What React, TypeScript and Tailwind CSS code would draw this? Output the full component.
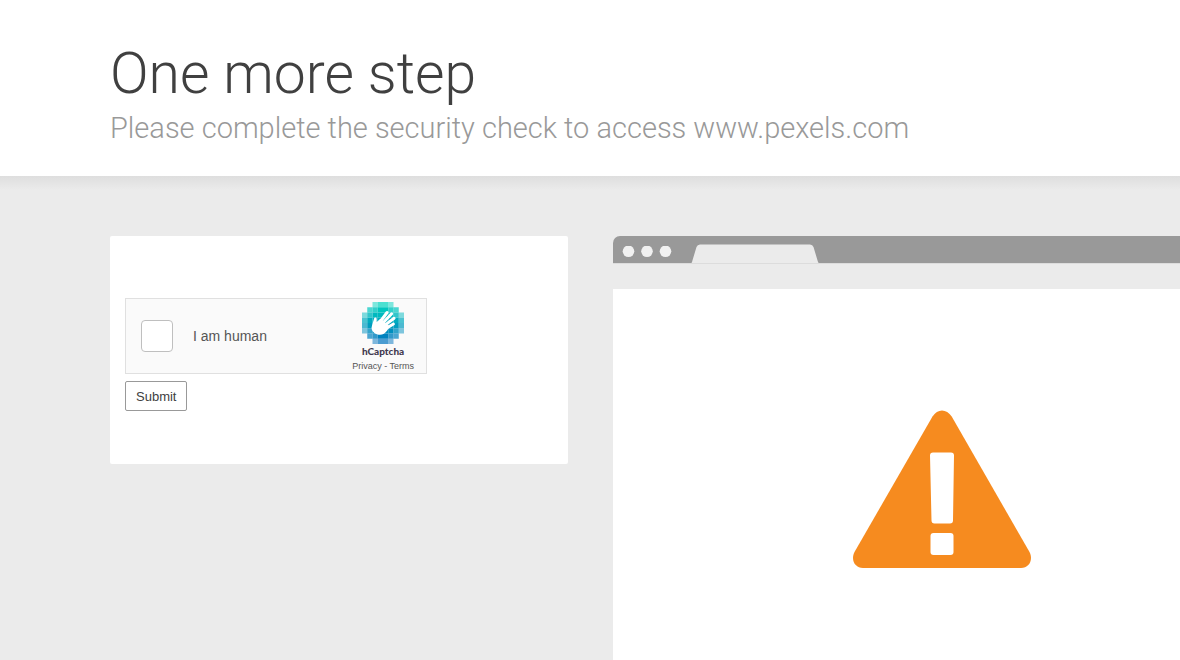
import { clsx } from "clsx";

// One colour per row of the logo grid, one opacity per cell
const logoRows = [
    { color: "#00D4BF", cells: [0, 0, 0.5, 0.7, 0.7, 0.5, 0, 0] },
    { color: "#00C6BF", cells: [0, 0.7, 0.8, 1, 1, 0.8, 0.7, 0] },
    { color: "#00B9BF", cells: [0.5, 0.8, 1, 1, 1, 1, 0.8, 0.5] },
    { color: "#00ABBF", cells: [0.7, 1, 1, 1, 1, 1, 1, 0.7] },
    { color: "#009DBF", cells: [0.7, 1, 1, 1, 1, 1, 1, 0.7] },
    { color: "#008FBF", cells: [0.5, 0.8, 1, 1, 1, 1, 0.8, 0.5] },
    { color: "#0082BF", cells: [0, 0.7, 0.8, 1, 1, 0.8, 0.7, 0] },
    { color: "#0074BF", cells: [0, 0, 0.5, 0.7, 0.7, 0.5, 0, 0] },
];

function CaptchaLogo() {
    return (
        <svg viewBox="0 0 32 32" className="size-[42px]" aria-hidden="true">
            {logoRows.map((row, y) =>
                row.cells.map((opacity, x) =>
                    opacity > 0 ? (
                        <rect key={`${x}-${y}`} x={x * 4} y={y * 4} width="4" height="4" fill={row.color} opacity={opacity} />
                    ) : null
                )
            )}
            <path
                d="M7.900 17 9.100 12.900C9.500 11.400 11.300 11.600 11.200 13.200L11.200 15.200 14 12.800 21 18.500 19.200 21.800C17.500 24.300 15.200 25.300 12.600 24.900 9.200 24.400 7.200 21.900 7.300 19.400Z"
                fill="#fff"
            />
            <g stroke="#fff" strokeWidth="2.3" strokeLinecap="round">
                <path d="M13.3 15.8 19.1 8" />
                <path d="M15 17 22.6 9" />
                <path d="M16.500 18.400 24.400 12.400" />
                <path d="M17 21 23.900 16.800" />
            </g>
        </svg>
    );
}

function Captcha() {
    return (
        <div className="flex h-[76px] w-full max-w-[302px] items-center justify-between border border-[#e0e0e0] bg-[#fafafa] pr-3 pl-[15px]">
            <div className="flex items-center gap-5">
                <input
                    id="human"
                    type="checkbox"
                    className="size-8 appearance-none rounded border border-[#bfbfbf] bg-white checked:bg-[#00838f]"
                />
                <label htmlFor="human" className="text-sm text-[#555]">
                    I am human
                </label>
            </div>
            <div className="flex flex-col items-center pt-0.5">
                <CaptchaLogo />
                <span className="font-['Lato',sans-serif] text-[10px] leading-[14px] font-black text-[#433a51]">hCaptcha</span>
                <span className="mt-px text-[9px] leading-[14px] text-[#555]">
                    <a href="#privacy">Privacy</a> - <a href="#terms">Terms</a>
                </span>
            </div>
        </div>
    );
}

function BrowserFrame() {
    return (
        <div className="flex min-w-[658px] flex-1 flex-col">
            <div className="flex h-7 items-center gap-[7px] rounded-tl-[7px] border-b border-[#dcdcdc] bg-[#999] pl-[9px]">
                <svg viewBox="0 0 50 12" className="mt-1 h-3 w-[50px]" aria-hidden="true">
                    {[6.5, 25, 43.5].map(cx => (
                        <circle key={cx} cx={cx} cy="5.300" r="5.800" fill="#f1f1f1" />
                    ))}
                </svg>
                <svg viewBox="0 0 128 19" className="ml-3 h-[19px] w-32 self-end" aria-hidden="true">
                    <path d="M0 19C1 19 1 18 1.300 17L5.500 3Q6.400 .5 9 .5H119Q121.600 .5 122.500 3L126.700 17Q127 19 128 19Z" fill="#ebebeb" />
                </svg>
            </div>
            <div className="mt-[25px] flex flex-1 justify-center bg-white pt-[121px]">
                <svg viewBox="0 0 178 158" className="h-[158px] w-[178px]" aria-hidden="true">
                    <path
                        d="M79.500 6.500C84.500 -1.500 93.500 -1.500 98.700 6.500L176.500 142C180.500 150 176 158 168 158H10C2 158 -2.500 150 1.500 142Z"
                        fill="#f68b1f"
                    />
                    <path d="M80 42.500H98Q101 42.500 101 45.500L100 110.500Q100 113.500 97 113.500H81.500Q78.500 113.500 78.500 110.500L77 45.500Q77 42.500 80 42.500Z" fill="#fff" />
                    <rect x="77.500" y="123" width="23" height="22" rx="3" fill="#fff" />
                </svg>
            </div>
        </div>
    );
}

export default function App() {
    const container = "mx-auto w-full max-w-[960px]";

    return (
        <div className="flex min-h-screen flex-col overflow-hidden bg-white font-['Liberation_Sans',Arial,sans-serif] text-[#404040]">
            <header className={clsx(container, "pt-[38px] pb-[29px] font-['Roboto',sans-serif] font-light")}>
                <h1 className="text-[57px] leading-[72px]">One more step</h1>
                <h2 className="text-[29px] leading-[37px] text-[#999]">
                    Please complete the security check to access www.pexels.com
                </h2>
            </header>

            <main className="flex flex-1 flex-col bg-[linear-gradient(#dedede,#ebebeb_14px)] pt-[60px]">
                <div className={clsx(container, "flex flex-1 gap-[45px]")}>
                    <form
                        className="flex min-w-[458px] flex-1 flex-col items-start gap-[7px] self-start rounded-xs bg-white px-[15px] pt-[62px] pb-[53px]"
                        onSubmit={e => e.preventDefault()}
                    >
                        <Captcha />
                        <button type="submit" className="h-[30px] rounded-xs border border-[#999] bg-white px-[10px] pt-px text-[13px]">
                            Submit
                        </button>
                    </form>
                    <div className="flex w-[457px] min-w-0">
                        <BrowserFrame />
                    </div>
                </div>
            </main>
        </div>
    );
}
